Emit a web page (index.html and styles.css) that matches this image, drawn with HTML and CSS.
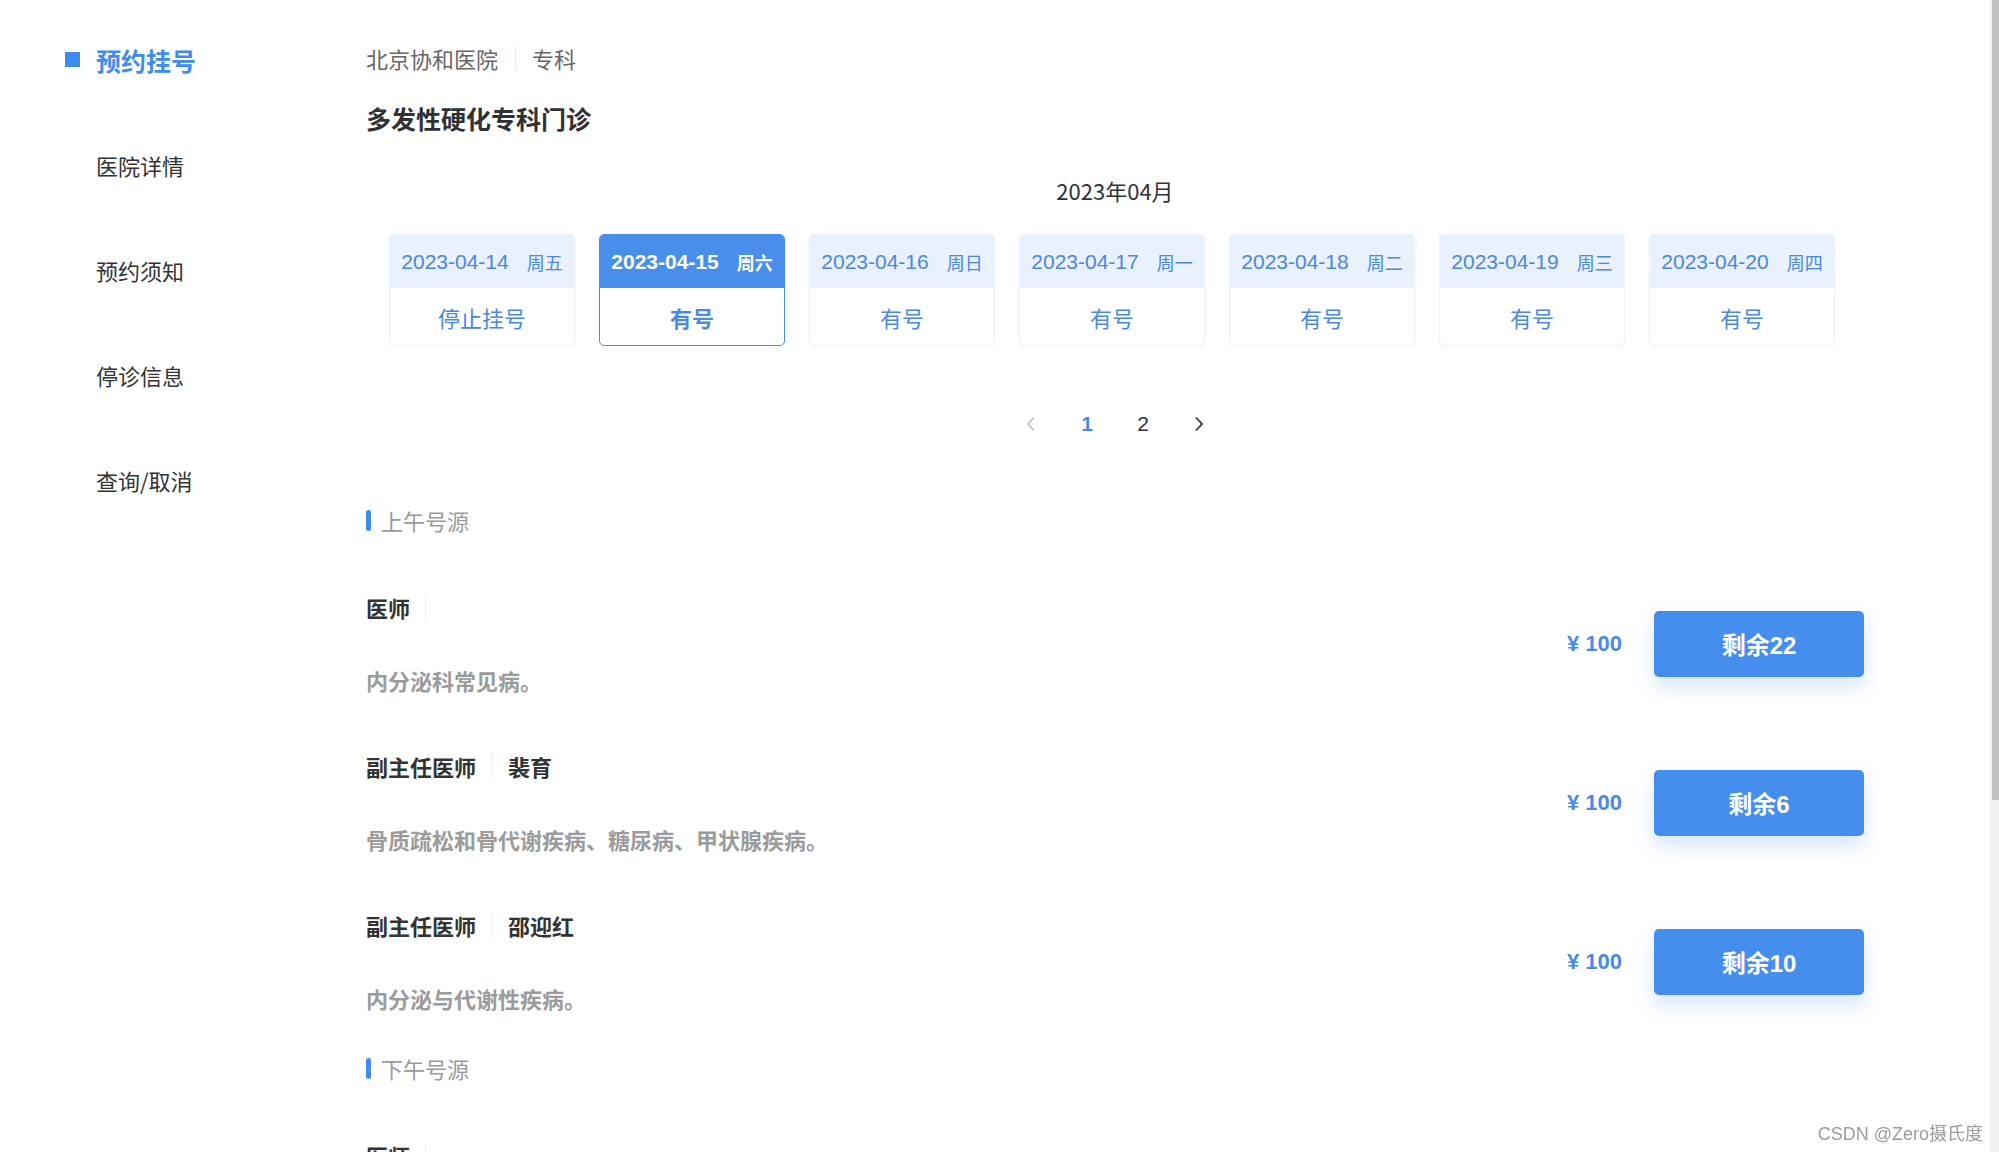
FILE: index.html
```html
<!DOCTYPE html>
<html lang="zh-CN">
<head>
<meta charset="utf-8">
<title>预约挂号</title>
<link rel="stylesheet" href="styles.css">
</head>
<body>
<div class="page">
  <aside class="sidebar">
    <div class="nav-item active"><span class="marker"></span>预约挂号</div>
    <div class="nav-item">医院详情</div>
    <div class="nav-item">预约须知</div>
    <div class="nav-item">停诊信息</div>
    <div class="nav-item">查询/取消</div>
  </aside>
  <main class="main">
    <div class="crumb"><span>北京协和医院</span><span class="crumb-sep"></span><span>专科</span></div>
    <h1 class="title">多发性硬化专科门诊</h1>
    <div class="month">2023年04月</div>
    <div class="dates">
      <div class="day-card"><div class="day-head"><span class="day-date">2023-04-14</span><span class="day-week">周五</span></div><div class="day-body">停止挂号</div></div>
      <div class="day-card selected"><div class="day-head"><span class="day-date">2023-04-15</span><span class="day-week">周六</span></div><div class="day-body">有号</div></div>
      <div class="day-card"><div class="day-head"><span class="day-date">2023-04-16</span><span class="day-week">周日</span></div><div class="day-body">有号</div></div>
      <div class="day-card"><div class="day-head"><span class="day-date">2023-04-17</span><span class="day-week">周一</span></div><div class="day-body">有号</div></div>
      <div class="day-card"><div class="day-head"><span class="day-date">2023-04-18</span><span class="day-week">周二</span></div><div class="day-body">有号</div></div>
      <div class="day-card"><div class="day-head"><span class="day-date">2023-04-19</span><span class="day-week">周三</span></div><div class="day-body">有号</div></div>
      <div class="day-card"><div class="day-head"><span class="day-date">2023-04-20</span><span class="day-week">周四</span></div><div class="day-body">有号</div></div>
    </div>
    <div class="pager">
      <span class="pg-btn disabled"><svg width="10" height="16" viewBox="0 0 10 16"><path d="M8 1.5 L2 8 L8 14.5" fill="none" stroke="currentColor" stroke-width="1.8"/></svg></span>
      <span class="pg-num current">1</span>
      <span class="pg-num">2</span>
      <span class="pg-btn"><svg width="10" height="16" viewBox="0 0 10 16"><path d="M2 1.5 L8 8 L2 14.5" fill="none" stroke="currentColor" stroke-width="1.8"/></svg></span>
    </div>

    <div class="sec-title first"><span class="sec-bar"></span>上午号源</div>
    <div class="slot-list">
      <div class="doc-row">
        <div class="doc-info">
          <div class="doc-head"><span>医师</span><span class="doc-sep"></span><span></span></div>
          <div class="doc-desc">内分泌科常见病。</div>
        </div>
        <div class="doc-act"><span class="price">¥ 100</span><button class="remain">剩余22</button></div>
      </div>
      <div class="doc-row">
        <div class="doc-info">
          <div class="doc-head"><span>副主任医师</span><span class="doc-sep"></span><span>裴育</span></div>
          <div class="doc-desc">骨质疏松和骨代谢疾病、糖尿病、甲状腺疾病。</div>
        </div>
        <div class="doc-act"><span class="price">¥ 100</span><button class="remain">剩余6</button></div>
      </div>
      <div class="doc-row">
        <div class="doc-info">
          <div class="doc-head"><span>副主任医师</span><span class="doc-sep"></span><span>邵迎红</span></div>
          <div class="doc-desc">内分泌与代谢性疾病。</div>
        </div>
        <div class="doc-act"><span class="price">¥ 100</span><button class="remain">剩余10</button></div>
      </div>
    </div>

    <div class="sec-title"><span class="sec-bar"></span>下午号源</div>
    <div class="slot-list">
      <div class="doc-row">
        <div class="doc-info">
          <div class="doc-head"><span>医师</span><span class="doc-sep"></span><span></span></div>
          <div class="doc-desc">内分泌科常见病。</div>
        </div>
        <div class="doc-act"><span class="price">¥ 100</span><button class="remain">剩余18</button></div>
      </div>
    </div>
  </main>
</div>
<div class="scrollbar"><div class="scroll-thumb"></div></div>
<div class="watermark">CSDN @Zero摄氏度</div>
</body>
</html>
```
FILE: styles.css
```css
html, body {
  margin: 0;
  padding: 0;
  background: #ffffff;
  overflow: hidden;
}
body {
  font-family: "Noto Sans CJK SC", "Liberation Sans", sans-serif;
  color: #333333;
}
.page {
  display: flex;
  align-items: flex-start;
}
.sidebar {
  width: 301px;
  flex: none;
  padding: 7px 0 0 65px;
}
.nav-item {
  height: 105px;
  display: flex;
  align-items: center;
  padding-left: 31px;
  font-size: 22px;
  line-height: 30px;
  color: #333333;
}
.nav-item.active {
  padding-left: 0;
  font-size: 25px;
  font-weight: 700;
  color: #3f8cf0;
}
.marker {
  width: 15px;
  height: 15px;
  background: #3f8cf0;
  margin-right: 16px;
  flex: none;
}
.main {
  width: 1498px;
  flex: none;
  padding-top: 43px;
  display: flex;
  flex-direction: column;
}
.crumb {
  display: flex;
  align-items: center;
  font-size: 22px;
  line-height: 30px;
  color: #666666;
}
.crumb-sep {
  width: 1px;
  height: 22px;
  background: #e6e6e6;
  margin: 0 16px 0 17px;
}
.title {
  margin: 27px 0 0;
  font-size: 25px;
  line-height: 36px;
  font-weight: 700;
  color: #303133;
}
.month {
  margin-top: 39px;
  text-align: center;
  font-size: 22px;
  line-height: 30px;
  color: #303133;
}
.dates {
  margin-top: 29px;
  display: flex;
  justify-content: center;
  gap: 24px;
  padding-right: 6px;
}
.day-card {
  width: 186px;
  height: 112px;
  box-sizing: border-box;
  border: 1px solid #eef1f5;
  border-radius: 5px;
  overflow: hidden;
  box-shadow: 0 1px 4px rgba(0, 0, 0, 0.04);
  color: #4a88e2;
}
.day-head {
  height: 53px;
  background: #e8f1fd;
  display: flex;
  align-items: center;
  justify-content: center;
  gap: 18px;
}
.day-date {
  font-family: "Liberation Sans", "Noto Sans CJK SC", sans-serif;
  font-size: 21px;
}
.day-week {
  font-size: 18px;
}
.day-body {
  height: 57px;
  display: flex;
  align-items: center;
  justify-content: center;
  font-size: 22px;
}
.day-card.selected {
  border-color: #4a8eec;
}
.day-card.selected .day-head {
  background: #4a8eec;
  color: #ffffff;
  font-weight: 700;
}
.day-card.selected .day-body {
  font-weight: 700;
  color: #4a8ae6;
}
.pager {
  margin: 58px 0 20px;
  height: 40px;
  display: flex;
  justify-content: center;
  align-items: center;
  font-family: "Liberation Sans", sans-serif;
  font-size: 21px;
  color: #303133;
}
.pg-btn, .pg-num {
  width: 56px;
  display: flex;
  justify-content: center;
  align-items: center;
}
.pg-btn.disabled {
  color: #c0c4cc;
}
.pg-num.current {
  color: #4a8ae6;
  font-weight: 700;
}
.sec-title {
  margin: 40px 0 57px;
  display: flex;
  align-items: center;
  font-size: 22px;
  line-height: 30px;
  color: #9a9a9a;
}
.sec-title.first {
  margin-top: 41px;
}
.sec-bar {
  width: 5px;
  height: 21px;
  border-radius: 3px;
  background: #3f8cf0;
  margin-right: 10px;
}
.slot-list {
  display: flex;
  flex-direction: column;
  gap: 56px;
}
.doc-row {
  display: flex;
  align-items: center;
  justify-content: space-between;
}
.doc-head {
  display: flex;
  align-items: center;
  font-size: 22px;
  line-height: 30px;
  font-weight: 700;
  color: #333333;
}
.doc-sep {
  width: 1px;
  height: 25px;
  background: #eeeeee;
  margin: 0 16px 0 15px;
}
.doc-desc {
  margin-top: 43px;
  font-size: 22px;
  line-height: 30px;
  font-weight: 700;
  color: #9b9b9b;
}
.doc-act {
  display: flex;
  align-items: center;
  gap: 32px;
}
.price {
  font-family: "Liberation Sans", sans-serif;
  font-size: 22px;
  font-weight: 700;
  color: #4a8ae6;
}
.remain {
  width: 210px;
  height: 66px;
  border: none;
  border-radius: 5px;
  background: #468eee;
  color: #ffffff;
  font-family: "Liberation Sans", "Noto Sans CJK SC", sans-serif;
  font-size: 24px;
  font-weight: 700;
  box-shadow: 0 10px 20px rgba(70, 142, 238, 0.22);
  cursor: pointer;
}
.scrollbar {
  position: fixed;
  top: 0;
  right: 0;
  width: 9px;
  height: 100%;
  background: #f1f1f1;
}
.scroll-thumb {
  margin-left: 2px;
  width: 7px;
  height: 800px;
  background: #c1c1c1;
}
.watermark {
  position: fixed;
  right: 16px;
  bottom: 8px;
  font-family: "Liberation Sans", "Noto Sans CJK SC", sans-serif;
  font-size: 18px;
  line-height: 20px;
  color: #9c9c9c;
}
```
